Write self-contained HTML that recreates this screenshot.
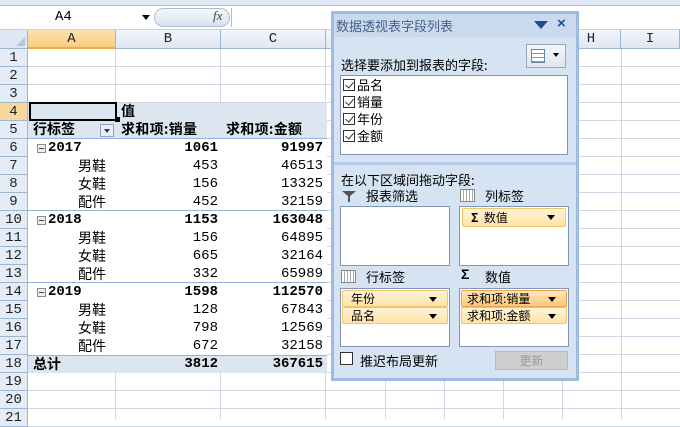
<!DOCTYPE html>
<html><head><meta charset="utf-8"><style>
*{margin:0;padding:0;box-sizing:border-box}
body{width:680px;height:412px;overflow:hidden;background:#fff;position:relative;font-family:"Liberation Sans","Noto Sans CJK SC",sans-serif;font-size:13px}
.a{position:absolute}
.cjk{font-family:"Noto Sans CJK SC",sans-serif}
.mono{font-family:"Liberation Mono","Noto Sans CJK SC",monospace}
.hl{position:absolute;height:1px;background:#d0d7e5}
.vl{position:absolute;width:1px;background:#d0d7e5}
.rh{position:absolute;left:0;width:28px;height:18px;background:#e4ecf7;border-bottom:1px solid #9eb6ce;border-right:1px solid #9eb6ce;text-align:center;line-height:18px;color:#222;font-family:"Liberation Mono",monospace;font-size:14px}
.ch{position:absolute;top:30px;height:19px;background:linear-gradient(#f3f6fb,#dfe7f2);border-right:1px solid #9eb6ce;border-bottom:1px solid #9eb6ce;text-align:center;line-height:19px;font-family:"Liberation Mono",monospace;color:#222;font-size:14px}
.num{position:absolute;text-align:right;font-family:"Liberation Mono",monospace;font-size:14px;line-height:18px}
.b{font-weight:bold}
.lab{position:absolute;font-family:"Noto Sans CJK SC",sans-serif;font-size:14px;line-height:18px}
.box{position:absolute;background:#fff;border:1px solid #7f96b5}
.chip{position:absolute;height:17px;background:linear-gradient(#fff4d9,#ffe3a5);border:1px solid #f1c56d;border-radius:2px;font-size:12px;line-height:15px;padding-left:8px;font-family:"Noto Sans CJK SC",sans-serif}
.chip i{position:absolute;right:10px;top:6px;border-left:4px solid transparent;border-right:4px solid transparent;border-top:5px solid #000}
.cb{position:absolute;width:12px;height:12px;border:1px solid #333;background:#fff}
.cb:after{content:"";position:absolute;left:3px;top:0px;width:4px;height:7px;border-right:1.5px solid #333;border-bottom:1.5px solid #333;transform:rotate(40deg)}
</style></head><body>
<div class="a" style="left:0;top:0;width:680px;height:6px;background:#dfe8f5;border-bottom:1px solid #a8bcd6"></div>
<div class="a" style="left:0;top:6px;width:680px;height:24px;background:#fff;border-bottom:1px solid #c5d2e3"></div>
<div class="a mono" style="left:55px;top:9px;font-size:14px">A4</div>
<div class="a" style="left:142px;top:15px;border-left:4px solid transparent;border-right:4px solid transparent;border-top:5px solid #000"></div>
<div class="a" style="left:154px;top:8px;width:76px;height:19px;border-radius:10px;background:linear-gradient(#f5f8fc,#d8e2ef);border:1px solid #a9bdd6"></div>
<div class="a" style="left:213px;top:8px;font-family:'Liberation Serif',serif;font-style:italic;font-size:13px;color:#444">fx</div>
<div class="a" style="left:231px;top:8px;width:1px;height:19px;background:#a9bdd6"></div>
<div class="a" style="left:0;top:30px;width:28px;height:19px;background:#dfe7f2;border-right:1px solid #9eb6ce;border-bottom:1px solid #9eb6ce"></div>
<div class="a" style="left:16px;top:37px;border-left:9px solid transparent;border-bottom:9px solid #b5c7dd"></div>
<div class="ch" style="left:28px;width:88px;background:linear-gradient(#fbe3b0,#f9cd7f);border-bottom:2px solid #f2a94a">A</div>
<div class="ch" style="left:116px;width:105px">B</div>
<div class="ch" style="left:221px;width:105px">C</div>
<div class="ch" style="left:326px;width:59px">D</div>
<div class="ch" style="left:562px;width:59px">H</div>
<div class="ch" style="left:621px;width:59px">I</div>
<div id="grid"></div>
<script>
var g='';
for(var i=1;i<=21;i++){var t=49+(i-1)*18;
g+='<div class="rh" style="top:'+t+'px;'+(i==4?'background:#f9d79a;':'')+'">'+i+'</div>';
g+='<div class="hl" style="left:28px;width:652px;top:'+(t+17)+'px"></div>';}
[115,220,325,385,444,503,562,621].forEach(function(x){g+='<div class="vl" style="left:'+x+'px;top:49px;height:370px"></div>';});
document.getElementById('grid').innerHTML=g;
</script>
<div class="a" style="left:28px;top:121px;width:299px;height:234px;background:#fff"></div>
<div class="a" style="left:28px;top:103px;width:299px;height:36px;background:#dce6f1"></div>
<div class="a" style="left:28px;top:138px;width:299px;height:1px;background:#95b3d7"></div>
<div class="a" style="left:28px;top:355px;width:299px;height:18px;background:#dce6f1;border-top:1px solid #95b3d7"></div>
<div class="a" style="left:28px;top:210px;width:299px;height:1px;background:#95b3d7"></div>
<div class="a" style="left:28px;top:282px;width:299px;height:1px;background:#95b3d7"></div>
<div class="a" style="left:29px;top:102px;width:88px;height:19px;border:2px solid #000"></div>
<div class="a" style="left:115px;top:117px;width:5px;height:5px;background:#000"></div>
<div class="lab b" style="left:121px;top:102px">值</div>
<div class="lab b" style="left:33px;top:120px">行标签</div>
<div class="a" style="left:100px;top:124px;width:14px;height:13px;background:#e8eef7;border:1px solid #8fa5c3"></div>
<div class="a" style="left:104px;top:129px;border-left:3px solid transparent;border-right:3px solid transparent;border-top:4px solid #335"></div>
<div class="lab b" style="left:121px;top:120px;letter-spacing:0.3px">求和项:销量</div>
<div class="lab b" style="left:226px;top:120px;letter-spacing:0.3px">求和项:金额</div>
<div id="pv"></div>
<script>
var d=[[6,'2017','1061','91997',1],[7,'男鞋','453','46513'],[8,'女鞋','156','13325'],[9,'配件','452','32159'],
[10,'2018','1153','163048',1],[11,'男鞋','156','64895'],[12,'女鞋','665','32164'],[13,'配件','332','65989'],
[14,'2019','1598','112570',1],[15,'男鞋','128','67843'],[16,'女鞋','798','12569'],[17,'配件','672','32158']];
var h='';
d.forEach(function(r){var t=49+(r[0]-1)*18;var b=r[4]?' b':'';
if(r[4]){h+='<div class="a" style="left:37px;top:'+(t+5)+'px;width:9px;height:9px;border:1px solid #888;background:#eee"></div><div class="a" style="left:39px;top:'+(t+9)+'px;width:5px;height:1px;background:#444"></div>';
h+='<div class="num b" style="left:48px;top:'+t+'px;text-align:left">'+r[1]+'</div>';}
else h+='<div class="lab" style="left:78px;top:'+t+'px">'+r[1]+'</div>';
h+='<div class="num'+b+'" style="left:116px;width:102px;top:'+t+'px">'+r[2]+'</div>';
h+='<div class="num'+b+'" style="left:221px;width:102px;top:'+t+'px">'+r[3]+'</div>';});
var t=49+17*18;
h+='<div class="lab b" style="left:33px;top:'+t+'px">总计</div><div class="num b" style="left:116px;width:102px;top:'+t+'px">3812</div><div class="num b" style="left:221px;width:102px;top:'+t+'px">367615</div>';
document.getElementById('pv').innerHTML=h;
</script>
<div class="a" style="left:331px;top:11px;width:248px;height:370px;background:#d6e3f2;border:3px solid #9fbbe2"></div>
<div class="a" style="left:334px;top:14px;width:242px;height:23px;background:#c9daee"></div>
<div class="a cjk" style="left:336px;top:16px;font-size:13px;color:#45608a">数据透视表字段列表</div>
<div class="a" style="left:534px;top:21px;border-left:7px solid transparent;border-right:7px solid transparent;border-top:8px solid #1f4f8f"></div>
<div class="a" style="left:557px;top:15px;font-size:15px;color:#1f4f8f;font-weight:bold">×</div>
<div class="a" style="left:526px;top:44px;width:40px;height:24px;background:linear-gradient(#f3f6fa,#dfe6ef);border:1px solid #9aa9bb"></div>
<div class="a" style="left:531px;top:49px;width:14px;height:14px;border:1px solid #6a85a8;background:repeating-linear-gradient(#fff 0 3px,#7b9bc7 3px 4px)"></div>
<div class="a" style="left:553px;top:53px;border-left:3px solid transparent;border-right:3px solid transparent;border-top:4px solid #000"></div>
<div class="a cjk" style="left:341px;top:55px;font-size:13px">选择要添加到报表的字段:</div>
<div class="box" style="left:340px;top:75px;width:228px;height:80px"></div>
<div class="cb" style="left:343px;top:79px"></div><div class="a cjk" style="left:357px;top:75px">品名</div>
<div class="cb" style="left:343px;top:96px"></div><div class="a cjk" style="left:357px;top:92px">销量</div>
<div class="cb" style="left:343px;top:113px"></div><div class="a cjk" style="left:357px;top:109px">年份</div>
<div class="cb" style="left:343px;top:130px"></div><div class="a cjk" style="left:357px;top:126px">金额</div>
<div class="a" style="left:334px;top:162px;width:242px;height:3px;background:#b5cbe8"></div>
<div class="a cjk" style="left:341px;top:170px">在以下区域间拖动字段:</div>
<div class="a" style="left:342px;top:191px;border-left:7px solid transparent;border-right:7px solid transparent;border-top:6px solid #555"></div>
<div class="a" style="left:348px;top:196px;width:2px;height:6px;background:#555"></div>
<div class="a cjk" style="left:366px;top:186px">报表筛选</div>
<div class="a" style="left:460px;top:189px;width:15px;height:13px;border:1px solid #888;background:repeating-linear-gradient(90deg,#fff 0 2px,#aaa 2px 3px),#ddd"></div>
<div class="a cjk" style="left:485px;top:186px">列标签</div>
<div class="box" style="left:340px;top:206px;width:110px;height:60px"></div>
<div class="box" style="left:459px;top:206px;width:110px;height:60px"></div>
<div class="chip" style="left:462px;top:208px;width:104px;height:19px;line-height:17px"><b>Σ</b>&nbsp; 数值<i></i></div>
<div class="a" style="left:341px;top:270px;width:15px;height:13px;border:1px solid #888;background:repeating-linear-gradient(90deg,#fff 0 2px,#aaa 2px 3px),#ddd"></div>
<div class="a cjk" style="left:366px;top:267px">行标签</div>
<div class="a" style="left:461px;top:266px;font-weight:bold;font-size:14px">Σ</div>
<div class="a cjk" style="left:485px;top:267px">数值</div>
<div class="box" style="left:340px;top:288px;width:110px;height:59px"></div>
<div class="box" style="left:459px;top:288px;width:110px;height:59px"></div>
<div class="chip" style="left:342px;top:290px;width:106px">年份<i></i></div>
<div class="chip" style="left:342px;top:307px;width:106px">品名<i></i></div>
<div class="chip" style="left:461px;top:290px;width:106px;background:linear-gradient(#ffe6bd,#ffc87a);border-color:#e9a24e;padding-left:5px">求和项:销量<i></i></div>
<div class="chip" style="left:461px;top:307px;width:106px;padding-left:5px">求和项:金额<i></i></div>
<div class="a" style="left:340px;top:352px;width:13px;height:13px;border:1px solid #333;background:#fff"></div>
<div class="a cjk" style="left:360px;top:351px">推迟布局更新</div>
<div class="a cjk" style="left:495px;top:351px;width:73px;height:19px;background:#cfcfcf;border:1px solid #b8b8b8;color:#9a9a9a;text-align:center;font-size:12px;line-height:17px">更新</div>
</body></html>
